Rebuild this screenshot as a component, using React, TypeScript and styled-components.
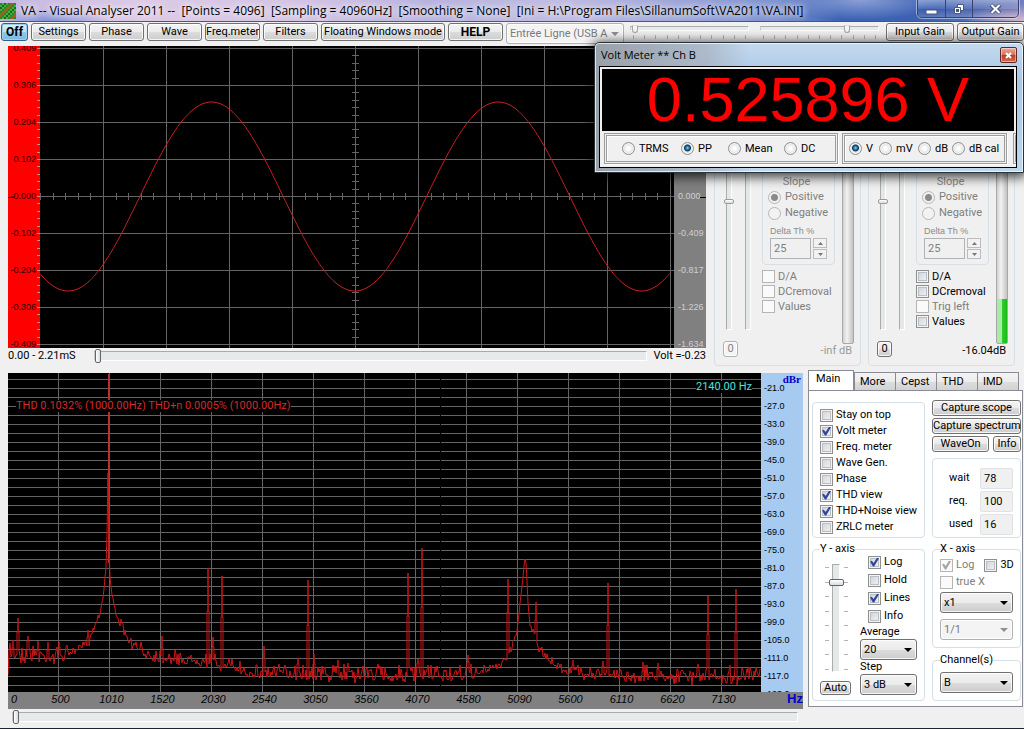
import React from "react";
import styled, { createGlobalStyle, css } from "styled-components";

const GlobalStyle = createGlobalStyle`
  *, *::before, *::after { box-sizing: border-box; }
  body {
    margin: 0;
    background: #f0f0f0;
    color: #000;
    font: 11px/14px Roboto, "Liberation Sans", Arial, sans-serif;
  }
  button, input, select { font: inherit; color: inherit; margin: 0; }
  fieldset { margin: 0; padding: 0; min-width: 0; }
  legend { padding: 0; }
`;

/* ---------- window frame ---------- */

const Window = styled.div`
  position: relative;
  display: flex;
  flex-direction: column;
  min-height: 100vh;
  min-width: 900px;
  overflow: hidden;
  background: #f0f0f0;
  border-bottom: 1px solid #1c2433;
`;

const TitleBar = styled.header`
  display: flex;
  align-items: flex-start;
  height: 22px;
  padding: 0 5px 0 0;
  border-bottom: 1px solid #4b5378;
  background:
    radial-gradient(ellipse 60px 14px at 50px 22px, #7d90d8, transparent),
    radial-gradient(ellipse 80px 20px at 84% 0, #8c9fd6, transparent),
    radial-gradient(ellipse 60px 16px at 100% 20px, #d5b4cf, transparent),
    linear-gradient(to right, #c3b6e0 0, #dccae6 14%, #d3c3e4 30%, #b7b3dd 42%, #c0bce2 55%, #9da6d8 66%, #7d92cf 76%, #3b62b5 82%, #3c61b3 90%, #7080bd 100%);
`;

const AppIcon = styled.svg`
  flex: none;
  width: 16px;
  height: 16px;
  margin-top: 3px;
`;

const Title = styled.h1`
  flex: 1;
  margin: 0 0 0 5px;
  font: 400 12px/22px "Open Sans", "Noto Sans", sans-serif;
  white-space: pre;
  text-shadow: 0 0 6px #fff, 0 0 8px #fff;
`;

const CaptionButtons = styled.div`
  display: flex;
  height: 18px;
  border: 1px solid #3a4370;
  border-top: 0;
  border-radius: 0 0 5px 5px;
  box-shadow: 0 0 0 1px rgba(255, 255, 255, 0.45);
`;

const CaptionButton = styled.button<{ $wide?: boolean }>`
  display: grid;
  place-items: center;
  width: ${(p) => (p.$wide ? 46 : 27)}px;
  padding: 0;
  border: 0;
  background: linear-gradient(rgba(255, 255, 255, 0.35), rgba(255, 255, 255, 0.05) 50%, rgba(20, 30, 90, 0.15) 51%, rgba(255, 255, 255, 0.15));
  & + & { border-left: 1px solid #3a4370; }
`;

/* ---------- shared controls ---------- */

const Button = styled.button<{ $width?: number; $height?: number; $bold?: boolean; $hot?: boolean }>`
  flex: none;
  width: ${(p) => (p.$width ? `${p.$width}px` : "auto")};
  height: ${(p) => p.$height ?? 18}px;
  padding: 0;
  border: 1px solid #707070;
  border-radius: 3px;
  background: linear-gradient(#f3f3f3, #ebebeb 50%, #dcdcdc 51%, #cdcdcd);
  box-shadow: inset 0 0 0 1px rgba(255, 255, 255, 0.8);
  line-height: 12px;
  white-space: nowrap;
  font-weight: ${(p) => (p.$bold ? 700 : 400)};
  font-size: ${(p) => (p.$bold ? 12 : 11)}px;
  ${(p) =>
    p.$hot &&
    css`
      border-color: #2c628b;
      background: linear-gradient(#dbeffb, #b9def3 50%, #8fc8ea 51%, #7db9df);
      box-shadow: inset 0 0 0 1px #9fd0ec;
    `}
  &:disabled { color: #838383; border-color: #adb2b5; background: #f4f4f4; }
`;

const SelectBox = styled.div<{ $width?: number; $disabled?: boolean }>`
  position: relative;
  flex: none;
  width: ${(p) => (p.$width ? `${p.$width}px` : "100%")};
  height: 21px;
  &::after {
    content: "";
    position: absolute;
    top: 9px;
    right: 5px;
    border: 4px solid transparent;
    border-top-color: ${(p) => (p.$disabled ? "#8f8f8f" : "#000")};
    border-bottom: 0;
    pointer-events: none;
  }
`;

const Select = styled.select`
  appearance: none;
  width: 100%;
  height: 100%;
  padding: 0 15px 0 3px;
  border: 1px solid #707070;
  border-radius: 3px;
  background: linear-gradient(#f3f3f3, #ebebeb 50%, #dcdcdc 51%, #cdcdcd);
  box-shadow: inset 0 0 0 1px rgba(255, 255, 255, 0.8);
  &:disabled { opacity: 1; color: #7a7a7a; border-color: #adb2b5; background: #f4f4f4; }
`;

const Check = styled.label<{ $disabled?: boolean }>`
  display: flex;
  align-items: center;
  gap: 3px;
  height: 16px;
  white-space: nowrap;
  color: ${(p) => (p.$disabled ? "#7e7e7e" : "#000")};
`;

const CheckInput = styled.input.attrs({ type: "checkbox" })`
  appearance: none;
  flex: none;
  display: grid;
  place-items: center;
  width: 13px;
  height: 13px;
  border: 1px solid #8e8f8f;
  background: linear-gradient(135deg, #cbcfd5, #f6f6f6);
  box-shadow: inset 0 0 0 1px #f4f4f4, inset 0 0 0 2px #b9bfc6;
  &:checked::after {
    content: "";
    width: 9px;
    height: 9px;
    background: #31479c;
    clip-path: polygon(0 45%, 20% 35%, 40% 62%, 80% 0, 100% 8%, 46% 100%, 32% 100%);
  }
  &:disabled { border-color: #b5b5b5; background: #fafafa; box-shadow: none; }
  &:disabled:checked::after { background: #a5a5a5; }
`;

const Radio = styled.label<{ $disabled?: boolean }>`
  display: flex;
  align-items: center;
  gap: 4px;
  height: 16px;
  white-space: nowrap;
  color: ${(p) => (p.$disabled ? "#7e7e7e" : "#000")};
`;

const RadioInput = styled.input.attrs({ type: "radio" })`
  appearance: none;
  flex: none;
  width: 13px;
  height: 13px;
  border: 1px solid #8e8f8f;
  border-radius: 50%;
  background: radial-gradient(circle, #fdfdfd 20%, #d2d6db 80%);
  box-shadow: inset 0 0 0 1px #f4f4f4;
  &:checked { background: radial-gradient(circle at 50% 45%, #7fd4f5 0, #1b6a9c 2px, #0e3350 3px, #e4e8eb 4px); }
  &:disabled { border-color: #b5b5b5; background: #f2f2f2; }
  &:disabled:checked { background: radial-gradient(circle, #8a8a8a 3px, #ededed 4px); }
`;

const Range = styled.input.attrs({ type: "range" })`
  appearance: none;
  display: block;
  flex: 1;
  min-width: 0;
  height: 16px;
  background: transparent;
  &::-webkit-slider-runnable-track {
    height: 10px;
    border: 1px solid #fff;
    border-top-color: #a9acac;
    border-left-color: #c8caca;
    background: #e7eaea;
  }
  &::-webkit-slider-thumb {
    appearance: none;
    width: 6px;
    height: 14px;
    margin-top: -3px;
    border: 1px solid #60656a;
    border-radius: 2px;
    background: linear-gradient(to right, #fff, #dcdcdc);
  }
`;

const GainRange = styled(Range)`
  flex: none;
  width: 100%;
  height: 9px;
  &::-webkit-slider-runnable-track { height: 5px; }
  &::-webkit-slider-thumb {
    width: 6px;
    height: 8px;
    margin-top: -2px;
    border-color: #a5a5a5;
    border-top-color: #e0e0e0;
    border-radius: 1px 1px 4px 4px;
    background: #f4f4f4;
  }
`;

const VerticalRange = styled.input.attrs({ type: "range" })<{ $length: number; $track: number; $thumb: number }>`
  appearance: none;
  display: block;
  writing-mode: vertical-lr;
  width: 15px;
  height: ${(p) => p.$length}px;
  background: transparent;
  &::-webkit-slider-runnable-track {
    width: ${(p) => p.$track}px;
    margin: 0 auto;
    border: 1px solid #fff;
    border-top-color: #a9acac;
    border-left-color: #a9acac;
    background: #e4e8e8;
  }
  &::-webkit-slider-thumb {
    appearance: none;
    width: ${(p) => p.$thumb}px;
    height: ${(p) => (p.$thumb > 10 ? 7 : 5)}px;
    margin-left: ${(p) => Math.round((p.$track - p.$thumb) / 2) - 1}px;
    border: 1px solid ${(p) => (p.$thumb > 10 ? "#60656a" : "#9a9a9a")};
    border-radius: 2px;
    background: linear-gradient(#fff, #dcdcdc);
  }
`;

/* ---------- toolbar ---------- */

const Toolbar = styled.nav`
  display: flex;
  align-items: flex-start;
  gap: 3px;
  height: 24px;
  padding: 1px 0 0 1px;
`;

const GainSliders = styled.div`
  flex: 1;
  display: flex;
  gap: 11px;
  padding: 1px 4px 0 3px;
`;

const GainSlider = styled.div`
  flex: 1;
  min-width: 0;
`;

const Ticks = styled.div<{ $vertical?: boolean }>`
  display: flex;
  justify-content: space-between;
  flex-direction: ${(p) => (p.$vertical ? "column" : "row")};
  padding: ${(p) => (p.$vertical ? "3px 0 2px" : "2px 3px 0")};
`;

const Tick = styled.i<{ $vertical?: boolean }>`
  width: ${(p) => (p.$vertical ? 4 : 1)}px;
  height: ${(p) => (p.$vertical ? 1 : 4)}px;
  background: #b4b4b4;
`;

/* ---------- scope ---------- */

const UpperRow = styled.div`
  display: flex;
  gap: 8px;
  padding: 0 9px 0 8px;
`;

const Scope = styled.section`
  flex: 1;
  min-width: 0;
`;

const ScopeScreen = styled.div`
  display: flex;
  height: 302px;
  overflow: hidden;
  background: #000;
`;

const VoltAxis = styled.div<{ $right?: boolean }>`
  flex: none;
  position: relative;
  width: 32px;
  padding-top: ${(p) => (p.$right ? 132 : 0)}px;
  background: ${(p) => (p.$right ? "#808080" : "#f00")};
  color: ${(p) => (p.$right ? "#d0d0d0" : "#300000")};
  text-align: ${(p) => (p.$right ? "left" : "right")};
`;

const VoltScale = styled.ol<{ $right?: boolean }>`
  margin: ${(p) => (p.$right ? "0 0 -16px" : "-16px 0")};
  padding: ${(p) => (p.$right ? "0 0 0 4px" : "0 4px 0 0")};
  list-style: none;
  font: 9px/37px "Liberation Sans", Arial, sans-serif;
`;

const AxisTicks = styled.svg`
  position: absolute;
  inset: 0;
  width: 100%;
  height: 100%;
`;

const Plot = styled.svg`
  flex: 1;
  display: block;
  min-width: 0;
  width: 100%;
  height: 100%;
`;

const ScopeFooter = styled.div`
  display: flex;
  align-items: center;
  gap: 6px;
  height: 16px;
`;

const TimeLabel = styled.label`
  flex: none;
  width: 80px;
  white-space: nowrap;
`;

/* ---------- channel strips ---------- */

const Channels = styled.div`
  flex: none;
  display: flex;
  gap: 7px;
`;

const Channel = styled.section`
  display: grid;
  grid-template-columns: 47px 80px 12px;
  grid-template-rows: 288px 1fr;
  width: 147px;
  height: 320px;
  padding-top: 5px;
  border: 1px solid #d5dfe5;
  border-radius: 0 0 4px 4px;
`;

const ChannelSliders = styled.div`
  display: flex;
  gap: 4px;
  padding-left: 6px;
`;

const ChannelBody = styled.div`
  display: flex;
  flex-direction: column;
`;

const Trigger = styled.div`
  display: flex;
  flex-direction: column;
  justify-content: flex-end;
  width: 73px;
  height: 213px;
  padding: 0 5px 5px 5px;
  border: 1px solid #d5dfe5;
  border-radius: 4px;
  color: #8b8b8b;
`;

const SlopeTitle = styled.span`
  align-self: center;
  padding-right: 4px;
  line-height: 14px;
`;

const DeltaTitle = styled.label`
  margin-top: 5px;
  padding-left: 2px;
  font: 9px/10px "Liberation Sans", Arial, sans-serif;
  white-space: nowrap;
`;

const DeltaRow = styled.div`
  display: flex;
  gap: 2px;
  height: 21px;
  padding-left: 2px;
  margin-top: 2px;
`;

const DeltaInput = styled.input`
  width: 41px;
  padding: 0 3px;
  border: 1px solid #aeb3b8;
  background: #f0f0f0;
  &:disabled { color: #7e7e7e; }
`;

const Spinner = styled.div`
  display: flex;
  flex-direction: column;
  gap: 1px;
`;

const SpinButton = styled.button`
  display: grid;
  place-items: center;
  width: 14px;
  height: 10px;
  padding: 0;
  border: 1px solid #b9bdc1;
  background: #f2f2f2;
`;

const ChannelChecks = styled.div`
  display: flex;
  flex-direction: column;
  margin-top: 4px;
  & > label { height: 15px; }
`;

const Meter = styled.div<{ $level: number }>`
  align-self: start;
  height: 292px;
  width: 12px;
  border: 1px solid #a8a8a8;
  border-radius: 2px;
  background:
    linear-gradient(to right, #a4eda4 0 5px, #38c838 5px, #10c010) bottom / 100% ${(p) => p.$level}px no-repeat,
    linear-gradient(to right, #d0d0d0, #f2f2f2 40%, #c2c2c2);
`;

const ChannelFoot = styled.div<{ $disabled?: boolean }>`
  grid-column: 1 / -1;
  display: flex;
  align-items: flex-start;
  justify-content: space-between;
  padding: 1px 2px 0 8px;
  color: ${(p) => (p.$disabled ? "#9a9a9a" : "#000")};
`;

const Reading = styled.span`
  line-height: 20px;
`;

/* ---------- spectrum ---------- */

const LowerRow = styled.div`
  flex: 1;
  display: flex;
  gap: 5px;
  padding: 0 1px 0 8px;
`;

const Spectrum = styled.section`
  flex: 1;
  min-width: 0;
  padding-top: 3px;
`;

const SpectrumScreen = styled.div`
  display: flex;
  height: 319px;
  overflow: hidden;
`;

const SpectrumPlot = styled.div`
  position: relative;
  flex: 1;
  min-width: 0;
  background: #000;
`;

const Readout = styled.span<{ $side: "left" | "right" }>`
  position: absolute;
  top: ${(p) => (p.$side === "left" ? 27 : 8)}px;
  ${(p) => (p.$side === "left" ? "left: 8px; color: #d42a2a;" : "right: 9px; color: #4fe0dc;")}
  background: #000;
  line-height: 12px;
  white-space: nowrap;
`;

const DbAxis = styled.div`
  position: relative;
  flex: none;
  width: 42px;
  background: #a6caf0;
`;

const DbUnit = styled.b`
  position: absolute;
  top: 0;
  right: 2px;
  color: #0000c8;
  font: 700 11px/12px "Liberation Serif", "Times New Roman", serif;
`;

const DbScale = styled.ol`
  margin: 0;
  padding: 6px 0 0 3px;
  list-style: none;
  font: 9px/18px "Liberation Sans", Arial, sans-serif;
`;

const FreqAxis = styled.ol`
  display: flex;
  height: 17px;
  margin: 0;
  padding: 0;
  list-style: none;
  background: #808080;
  font: italic 11px/15px "Liberation Sans", Arial, sans-serif;
`;

const FreqLabel = styled.li<{ $grow: number }>`
  flex: ${(p) => p.$grow} 1 0;
  min-width: 0;
  text-align: center;
`;

const FreqFirst = styled(FreqLabel)`
  text-indent: 3px;
  text-align: left;
`;

const FreqUnit = styled.li`
  flex: none;
  width: 54px;
  color: #0000c8;
  font: 700 13px/14px "Liberation Sans", Arial, sans-serif;
  text-align: right;
`;

const ScrollRow = styled.div`
  display: flex;
  padding: 0 5px 0 4px;
`;

/* ---------- tabbed panel ---------- */

const TabPanel = styled.aside`
  flex: none;
  display: flex;
  flex-direction: column;
  width: 215px;
  height: 337px;
`;

const TabList = styled.div`
  display: flex;
  align-items: flex-end;
  height: 21px;
  margin-bottom: -1px;
`;

const Tab = styled.button<{ $selected?: boolean }>`
  width: ${(p) => (p.$selected ? 46 : 42)}px;
  height: ${(p) => (p.$selected ? 21 : 19)}px;
  padding: 0 0 ${(p) => (p.$selected ? 3 : 0)}px ${(p) => (p.$selected ? 7 : 5)}px;
  border: 1px solid #898c95;
  border-bottom-color: ${(p) => (p.$selected ? "#fff" : "#898c95")};
  margin-right: ${(p) => (p.$selected ? 0 : -1)}px;
  background: ${(p) => (p.$selected ? "#fff" : "linear-gradient(#f4f4f4, #ececec 50%, #dedede 51%, #d2d2d2)")};
  text-align: left;
`;

const TabBody = styled.div`
  flex: 1;
  display: grid;
  grid-template-columns: 113px 89px;
  gap: 7px;
  padding: 9px 2px 5px 3px;
  border: 1px solid #898c95;
  background: #fff;
`;

const Column = styled.div`
  display: flex;
  flex-direction: column;
`;

const Group = styled.fieldset<{ $height: number; $gap?: number }>`
  height: ${(p) => p.$height}px;
  margin-top: ${(p) => p.$gap ?? 0}px;
  padding: 0 7px;
  border: 1px solid #d5dfe5;
  border-radius: 4px;
`;

const Legend = styled.legend`
  background: #fff;
  line-height: 14px;
`;

const CheckList = styled.div`
  padding-top: 4px;
`;

const ButtonStack = styled.div`
  display: flex;
  flex-wrap: wrap;
  justify-content: space-between;
  gap: 2px 0;
`;

const Stats = styled.div`
  display: flex;
  flex-direction: column;
  gap: 2px;
  padding: 9px 0 0 9px;
`;

const Stat = styled.label`
  display: flex;
  justify-content: space-between;
  line-height: 19px;
`;

const StatInput = styled.input`
  width: 33px;
  height: 21px;
  padding: 0 3px;
  border: 1px solid #dde3e6;
  border-radius: 2px;
  background: #f0f0f0;
`;

const YAxisGrid = styled.div`
  display: grid;
  grid-template-columns: 32px 57px;
  gap: 8px;
`;

const YSlider = styled.div`
  display: flex;
  justify-content: center;
  height: 108px;
  margin: 8px 0 9px;
`;

const YControls = styled.div`
  display: flex;
  flex-direction: column;
  margin-top: -3px;
`;

const YChecks = styled.div`
  padding: 0 0 0 8px;
  & > label { height: 18px; }
`;

const FieldLabel = styled.label`
  line-height: 14px;
`;

const XStack = styled.div`
  display: flex;
  flex-direction: column;
`;

const XRow = styled.div`
  display: flex;
  gap: 10px;
  margin: 1px -4px 1px 0;
`;

const Spaced = styled.div<{ $top: number }>`
  padding-top: ${(p) => p.$top}px;
`;

/* ---------- volt meter window ---------- */

const MeterWindow = styled.section`
  position: absolute;
  top: 42px;
  right: 0;
  width: 430px;
  padding: 0 6px 4px 4px;
  border: 1px solid #2b3138;
  border-radius: 5px 5px 0 0;
  background:
    linear-gradient(to right, rgba(150, 155, 162, 0.9) 0, rgba(165, 175, 188, 0.7) 26%, transparent 36%),
    linear-gradient(#c3d9ef, #a9c6e4 30%, #bcd7f0);
  box-shadow: inset 0 0 0 1px rgba(255, 255, 255, 0.7), 0 2px 12px 2px rgba(0, 0, 0, 0.75);
`;

const MeterTitle = styled.header`
  display: flex;
  align-items: center;
  justify-content: space-between;
  height: 23px;
  padding: 1px 0 0 2px;
  font: 11px/20px "Open Sans", "Noto Sans", sans-serif;
`;

const CloseButton = styled.button`
  display: grid;
  place-items: center;
  width: 17px;
  height: 16px;
  padding: 0;
  border: 1px solid #5e2a26;
  border-radius: 2px;
  background: linear-gradient(#e9a99c, #d5705c 50%, #bd3a22 51%, #d8694f);
  box-shadow: inset 0 0 0 1px rgba(255, 255, 255, 0.45);
`;

const MeterClient = styled.div`
  overflow: hidden;
  border: 1px solid #000;
  background: #f0f0f0;
  padding: 2px;
`;

const Display = styled.output`
  display: block;
  height: 62px;
  background: #000;
  color: #f00;
  font: 63px/61px "Liberation Sans", Arial, sans-serif;
  text-align: center;
  white-space: nowrap;
`;

const MeterOptions = styled.div`
  display: flex;
  gap: 4px;
  height: 34px;
  padding: 2px 0 1px 2px;
`;

const OptionFrame = styled.fieldset<{ $width: number }>`
  flex: none;
  display: flex;
  align-items: center;
  width: ${(p) => p.$width}px;
  border: 3px double #9c9c9c;
  box-shadow: inset 1px 1px 0 #fff, 1px 1px 0 #fff;
  &:last-child { margin-left: 2px; }
`;

const OptionSlot = styled.div<{ $width: number }>`
  flex: none;
  width: ${(p) => p.$width}px;
`;

const OptionRow = styled.div<{ $indent: number }>`
  display: flex;
  padding-left: ${(p) => p.$indent}px;
`;

/* ---------- data ---------- */

const range = (n: number) => Array.from({ length: n }, (_, i) => i);

const LEFT_VOLTS = ["0.409", "0.306", "0.204", "0.102", "-0.000", "-0.102", "-0.204", "-0.306", "-0.409"];
const RIGHT_VOLTS = ["0.000", "-0.409", "-0.817", "-1.226", "-1.634"];
const DB_MARKS = range(18).map((i) => (-21 - 6 * i).toFixed(1));
const FREQS = [500, 1010, 1520, 2030, 2540, 3050, 3560, 4070, 4580, 5090, 5600, 6110, 6620, 7130];

const sinePath = range(631)
  .map((x) => `${x ? "L" : "M"}${x} ${(150.5 - 94.5 * Math.cos((2 * Math.PI * (x - 171.5)) / 286.7)).toFixed(1)}`)
  .join("");

/* Noise floor of the spectrum, as [x, y, jitter] knots. */
const FLOOR: [number, number, number][] = [
  [0, 280, 14], [20, 282, 10], [45, 285, 9], [62, 280, 6], [72, 275, 5], [80, 268, 5], [86, 255, 4], [92, 239, 3],
  [95, 225, 2], [97, 205, 2], [98, 195, 1], [99, 160, 0], [100, 100, 0], [101, 170, 0], [102, 205, 1], [104, 222, 1],
  [107, 236, 3], [111, 248, 5], [117, 262, 5], [124, 272, 5], [135, 279, 6], [150, 284, 7], [170, 287, 7],
  [195, 288, 8], [225, 295, 7], [245, 300, 7], [300, 301, 9], [400, 302, 9], [450, 303, 8], [475, 299, 6],
  [490, 293, 5], [500, 285, 5], [505, 270, 5], [509, 258, 5], [511, 240, 2], [513, 222, 2], [515, 205, 1],
  [516, 193, 0], [517, 186, 0], [518, 190, 0], [519, 208, 0], [520, 230, 1], [522, 252, 3], [526, 260, 4],
  [530, 275, 5], [538, 285, 5], [552, 295, 5], [570, 300, 7], [620, 303, 9], [753, 304, 8],
];

/* Narrow lines standing out of the floor, as [x, top]. */
const PEAKS: [number, number][] = [
  [5, 267], [10, 245], [20, 263], [30, 268], [40, 269], [51, 269], [80, 257], [154, 263], [200, 195], [205, 264],
  [214, 203], [256, 273], [290, 285], [300, 207], [306, 281], [330, 287], [340, 290], [400, 200], [410, 286],
  [414, 175], [460, 282], [500, 206], [528, 229], [565, 287], [600, 210], [595, 288], [635, 289], [650, 290],
  [690, 291], [700, 223], [728, 216], [740, 294],
];

function buildSpectrum() {
  let seed = 7;
  const random = () => {
    seed = (seed * 16807) % 2147483647;
    return seed / 2147483647;
  };
  const peaks = new Map(PEAKS);
  let path = "M0 302";
  let knot = 0;
  for (let x = 1; x < 753; x++) {
    while (FLOOR[knot + 1][0] < x) knot++;
    const [x0, y0, n0] = FLOOR[knot];
    const [x1, y1, n1] = FLOOR[knot + 1];
    const t = (x - x0) / (x1 - x0);
    const jitter = n0 + (n1 - n0) * t;
    const r = random() + random() - 1;
    const y = Math.min(315, Math.round(y0 + (y1 - y0) * t + r * jitter * (r < 0 ? 1.5 : 1)));
    const top = peaks.get(x);
    if (top !== undefined) {
      const mid = Math.round(top + (y - top) * 0.45);
      path += `L${x - 1} ${mid}L${x} ${mid}L${x} ${top}L${x} ${mid}L${x + 1} ${mid}L${x + 1} ${y}`;
      x++;
    } else {
      path += `L${x} ${y}`;
    }
  }
  return path;
}

const spectrumPath = buildSpectrum();

const ICON_COLORS = ["#1f8a2c", "#2fae38", "#c9b52c", "#146b22", "#48b03a", "#8f6a1c", "#1f8a2c"];

/* ---------- parts ---------- */

function CheckBox({ label, checked, disabled }: { label: string; checked?: boolean; disabled?: boolean }) {
  return (
    <Check $disabled={disabled}>
      <CheckInput defaultChecked={checked} disabled={disabled} />
      {label}
    </Check>
  );
}

function RadioButton(props: { name: string; label: string; checked?: boolean; disabled?: boolean }) {
  return (
    <Radio $disabled={props.disabled}>
      <RadioInput name={props.name} defaultChecked={props.checked} disabled={props.disabled} />
      {props.label}
    </Radio>
  );
}

function DropDown(props: { id?: string; label?: string; value: string; width?: number; disabled?: boolean }) {
  return (
    <SelectBox $width={props.width} $disabled={props.disabled}>
      <Select id={props.id} aria-label={props.label} disabled={props.disabled} defaultValue={props.value}>
        <option>{props.value}</option>
      </Select>
    </SelectBox>
  );
}

function TickMarks({ count, vertical }: { count: number; vertical?: boolean }) {
  return (
    <Ticks $vertical={vertical}>
      {range(count).map((i) => (
        <Tick key={i} $vertical={vertical} />
      ))}
    </Ticks>
  );
}

function ScopeView() {
  return (
    <Scope>
      <ScopeScreen>
        <VoltAxis>
          <VoltScale>
            {LEFT_VOLTS.map((v) => (
              <li key={v}>{v}</li>
            ))}
          </VoltScale>
          <AxisTicks viewBox="0 0 32 302" preserveAspectRatio="none" shapeRendering="crispEdges">
            {range(41).map((i) => (
              <path key={i} d={`M29 ${2.5 + 7.4 * i}H32`} stroke="#d88" />
            ))}
            <path d="M0 151.5H6" stroke="#000" />
          </AxisTicks>
        </VoltAxis>
        <Plot viewBox="0 0 634 302" preserveAspectRatio="none" role="img" aria-label="Oscilloscope trace">
          <g stroke="#646464" shapeRendering="crispEdges">
            {range(10).map((i) => (
              <path key={i} d={`M${63.5 + 63 * i} 0V302`} />
            ))}
            {range(9).map((i) => (
              <path key={i} d={`M0 ${2.5 + 37 * i}H634`} />
            ))}
            {range(40).map((i) => (
              <path key={i} d={`M312 ${Math.round(2 + 7.4 * i) + 0.5}H319`} />
            ))}
            {range(50).map((i) => (
              <path key={i} d={`M${Math.round(12.6 * i) + 0.5} 147V154`} />
            ))}
          </g>
          <path d={sinePath} fill="none" stroke="#cc2020" />
        </Plot>
        <VoltAxis $right>
          <VoltScale $right>
            {RIGHT_VOLTS.map((v) => (
              <li key={v}>{v}</li>
            ))}
          </VoltScale>
          <AxisTicks viewBox="0 0 32 302" preserveAspectRatio="none" shapeRendering="crispEdges">
            <path d="M26 151.5H32" stroke="#000" />
          </AxisTicks>
        </VoltAxis>
      </ScopeScreen>
      <ScopeFooter>
        <TimeLabel htmlFor="time-offset">0.00 - 2.21mS</TimeLabel>
        <Range id="time-offset" defaultValue={0} />
        <span>Volt =-0.23</span>
      </ScopeFooter>
    </Scope>
  );
}

function ChannelStrip(props: { id: string; reading: string; level: number; active?: boolean }) {
  const { id, active } = props;
  return (
    <Channel aria-label={`Channel ${id}`}>
      <ChannelSliders>
        <VerticalRange aria-label="Position" $length={278} $track={6} $thumb={10} min={0} max={100} defaultValue={54} />
        <VerticalRange aria-label="Trigger" $length={278} $track={6} $thumb={10} min={0} max={100} defaultValue={10} />
      </ChannelSliders>
      <ChannelBody>
        <Trigger role="group" aria-label="Trigger">
          <SlopeTitle>Slope</SlopeTitle>
          <RadioButton name={`slope-${id}`} label="Positive" checked disabled />
          <RadioButton name={`slope-${id}`} label="Negative" disabled />
          <DeltaTitle htmlFor={`delta-${id}`}>Delta Th %</DeltaTitle>
          <DeltaRow>
            <DeltaInput id={`delta-${id}`} defaultValue="25" disabled />
            <Spinner>
              <SpinButton aria-label="Increase" disabled>
                <svg width="5" height="3">
                  <path d="M0 3L2.5 0L5 3Z" fill="#777" />
                </svg>
              </SpinButton>
              <SpinButton aria-label="Decrease" disabled>
                <svg width="5" height="3">
                  <path d="M0 0L2.5 3L5 0Z" fill="#777" />
                </svg>
              </SpinButton>
            </Spinner>
          </DeltaRow>
        </Trigger>
        <ChannelChecks>
          <CheckBox label="D/A" disabled={!active} />
          <CheckBox label="DCremoval" disabled={!active} />
          {active && <CheckBox label="Trig left" disabled />}
          <CheckBox label="Values" disabled={!active} />
        </ChannelChecks>
      </ChannelBody>
      <Meter $level={props.level} />
      <ChannelFoot $disabled={!active}>
        <Button $width={15} $height={16} disabled={!active}>
          0
        </Button>
        <Reading>{props.reading}</Reading>
      </ChannelFoot>
    </Channel>
  );
}

function SpectrumView() {
  return (
    <Spectrum>
      <SpectrumScreen>
        <SpectrumPlot>
          <Plot viewBox="0 0 753 319" preserveAspectRatio="none" role="img" aria-label="Spectrum">
            <g stroke="#646464" shapeRendering="crispEdges">
              {range(14).map((i) => (
                <path key={i} d={`M${50.5 + 51 * i} 0V319`} />
              ))}
              {range(35).map((i) => (
                <path key={i} d={`M0 ${6.5 + 9 * i}H753`} />
              ))}
              <path d="M432.5 0V319" stroke="#000" />
            </g>
            <path d="M100.5 1V190" stroke="#b83030" strokeWidth="2" shapeRendering="crispEdges" />
            <path d={spectrumPath} fill="none" stroke="#cc1616" />
          </Plot>
          <Readout $side="left">THD 0.1032% (1000.00Hz) THD+n 0.0005% (1000.00Hz)</Readout>
          <Readout $side="right">2140.00 Hz</Readout>
        </SpectrumPlot>
        <DbAxis>
          <DbUnit>dBr</DbUnit>
          <DbScale>
            {DB_MARKS.map((v) => (
              <li key={v}>{v}</li>
            ))}
          </DbScale>
        </DbAxis>
      </SpectrumScreen>
      <FreqAxis>
        <FreqFirst $grow={27}>0</FreqFirst>
        {FREQS.map((f) => (
          <FreqLabel key={f} $grow={51}>
            {f}
          </FreqLabel>
        ))}
        <FreqUnit>Hz</FreqUnit>
      </FreqAxis>
      <ScrollRow>
        <Range aria-label="Frequency offset" defaultValue={0} />
      </ScrollRow>
    </Spectrum>
  );
}

function SettingsTabs() {
  return (
    <TabPanel>
      <TabList role="tablist">
        <Tab role="tab" $selected aria-selected>
          Main
        </Tab>
        {["More", "Cepst", "THD", "IMD"].map((t) => (
          <Tab key={t} role="tab">
            {t}
          </Tab>
        ))}
      </TabList>
      <TabBody role="tabpanel">
        <Column>
          <Group $height={136} $gap={2}>
            <CheckList>
              <CheckBox label="Stay on top" />
              <CheckBox label="Volt meter" checked />
              <CheckBox label="Freq. meter" />
              <CheckBox label="Wave Gen." />
              <CheckBox label="Phase" />
              <CheckBox label="THD view" checked />
              <CheckBox label="THD+Noise view" checked />
              <CheckBox label="ZRLC meter" />
            </CheckList>
          </Group>
          <Group $height={159} $gap={4}>
            <Legend>Y - axis</Legend>
            <YAxisGrid>
              <div>
                <YSlider>
                  <TickMarks count={8} vertical />
                  <VerticalRange aria-label="Y scale" $length={108} $track={8} $thumb={15} min={0} max={7} step={1} defaultValue={1} />
                  <TickMarks count={8} vertical />
                </YSlider>
                <Button $width={31} $height={14}>
                  Auto
                </Button>
              </div>
              <YControls>
                <YChecks>
                  <CheckBox label="Log" checked />
                  <CheckBox label="Hold" />
                  <CheckBox label="Lines" checked />
                  <CheckBox label="Info" />
                </YChecks>
                <FieldLabel htmlFor="average">Average</FieldLabel>
                <DropDown id="average" value="20" />
                <FieldLabel htmlFor="step">Step</FieldLabel>
                <DropDown id="step" value="3 dB" />
              </YControls>
            </YAxisGrid>
          </Group>
        </Column>
        <Column>
          <ButtonStack>
            <Button $width={89} $height={16}>Capture scope</Button>
            <Button $width={89} $height={16}>Capture spectrum</Button>
            <Button $width={57} $height={16}>WaveOn</Button>
            <Button $width={28} $height={16}>Info</Button>
          </ButtonStack>
          <Group $height={80} $gap={6}>
            <Stats>
              <Stat>
                wait
                <StatInput readOnly value="78" />
              </Stat>
              <Stat>
                req.
                <StatInput readOnly value="100" />
              </Stat>
              <Stat>
                used
                <StatInput readOnly value="16" />
              </Stat>
            </Stats>
          </Group>
          <Group $height={106} $gap={4}>
            <Legend>X - axis</Legend>
            <XStack>
              <XRow>
                <CheckBox label="Log" checked disabled />
                <CheckBox label="3D" />
              </XRow>
              <CheckBox label="true X" disabled />
              <Spaced $top={2}>
                <DropDown label="Zoom" value="x1" />
              </Spaced>
              <Spaced $top={6}>
                <DropDown label="Ratio" value="1/1" disabled />
              </Spaced>
            </XStack>
          </Group>
          <Group $height={48} $gap={5}>
            <Legend>Channel(s)</Legend>
            <Spaced $top={5}>
              <DropDown label="Channel(s)" value="B" />
            </Spaced>
          </Group>
        </Column>
      </TabBody>
    </TabPanel>
  );
}

function VoltMeter() {
  return (
    <MeterWindow aria-label="Volt Meter">
      <MeterTitle>
        <span>Volt Meter ** Ch B</span>
        <CloseButton aria-label="Close">
          <svg width="7" height="7" viewBox="0 0 7 7">
            <path d="M1 1L6 6M6 1L1 6" stroke="#fff" strokeWidth="2" />
          </svg>
        </CloseButton>
      </MeterTitle>
      <MeterClient>
        <Display>0.525896 V</Display>
        <MeterOptions>
          <OptionFrame $width={234} aria-label="Measure">
            <OptionRow $indent={15}>
              <OptionSlot $width={59}>
                <RadioButton name="measure" label="TRMS" />
              </OptionSlot>
              <OptionSlot $width={47}>
                <RadioButton name="measure" label="PP" checked />
              </OptionSlot>
              <OptionSlot $width={56}>
                <RadioButton name="measure" label="Mean" />
              </OptionSlot>
              <RadioButton name="measure" label="DC" />
            </OptionRow>
          </OptionFrame>
          <OptionFrame $width={165} aria-label="Unit">
            <OptionRow $indent={4}>
              <OptionSlot $width={30}>
                <RadioButton name="unit" label="V" checked />
              </OptionSlot>
              <OptionSlot $width={39}>
                <RadioButton name="unit" label="mV" />
              </OptionSlot>
              <OptionSlot $width={34}>
                <RadioButton name="unit" label="dB" />
              </OptionSlot>
              <RadioButton name="unit" label="dB cal" />
            </OptionRow>
          </OptionFrame>
          <OptionFrame $width={40} aria-label="Range" />
        </MeterOptions>
      </MeterClient>
    </MeterWindow>
  );
}

export default function App() {
  return (
    <>
      <GlobalStyle />
      <Window>
        <TitleBar>
          <AppIcon viewBox="0 0 8 8" shapeRendering="crispEdges" aria-hidden>
            {range(64).map((i) => (
              <rect key={i} x={i % 8} y={Math.floor(i / 8)} width="1" height="1" fill={ICON_COLORS[(i * i + 3 * i) % 7]} />
            ))}
          </AppIcon>
          <Title>
            {"VA -- Visual Analyser 2011 --  [Points = 4096]  [Sampling = 40960Hz]  [Smoothing = None]  [Ini = H:\\Program Files\\SillanumSoft\\VA2011\\VA.INI]"}
          </Title>
          <CaptionButtons>
            <CaptionButton aria-label="Minimize">
              <svg width="13" height="12">
                <rect x="1" y="7" width="11" height="4" fill="#fff" stroke="#4a5580" />
              </svg>
            </CaptionButton>
            <CaptionButton aria-label="Restore">
              <svg width="12" height="12">
                <path d="M4.5 1.5H10.5V7.5H7.5V10.5H1.5V4.5H4.5Z" fill="#fff" stroke="#4a5580" />
                <path d="M4.5 4.5H7.5V7.5" fill="none" stroke="#4a5580" />
                <rect x="3.5" y="6.5" width="2" height="2" fill="#4a5580" stroke="#4a5580" />
              </svg>
            </CaptionButton>
            <CaptionButton aria-label="Close" $wide>
              <svg width="13" height="12">
                <path d="M2 2L11 10M11 2L2 10" stroke="#4a5580" strokeWidth="4" />
                <path d="M2.5 2L10.5 10M10.5 2L2.5 10" stroke="#fff" strokeWidth="2" />
              </svg>
            </CaptionButton>
          </CaptionButtons>
        </TitleBar>
        <Toolbar>
          <Button $width={27} $bold $hot>Off</Button>
          <Button $width={55}>Settings</Button>
          <Button $width={55}>Phase</Button>
          <Button $width={55}>Wave</Button>
          <Button $width={55}>Freq.meter</Button>
          <Button $width={55}>Filters</Button>
          <Button $width={124}>Floating Windows mode</Button>
          <Button $width={55} $bold>HELP</Button>
          <DropDown label="Input line" value="Entrée Ligne (USB A" width={118} disabled />
          <GainSliders>
            <GainSlider>
              <GainRange aria-label="Input gain" defaultValue={1} />
              <TickMarks count={11} />
            </GainSlider>
            <GainSlider>
              <GainRange aria-label="Output gain" defaultValue={75} />
              <TickMarks count={11} />
            </GainSlider>
          </GainSliders>
          <Button $width={68}>Input Gain</Button>
          <Button $width={67}>Output Gain</Button>
        </Toolbar>
        <UpperRow>
          <ScopeView />
          <Channels>
            <ChannelStrip id="A" reading="-inf dB" level={0} />
            <ChannelStrip id="B" reading="-16.04dB" level={44} active />
          </Channels>
        </UpperRow>
        <Spaced $top={4} />
        <LowerRow>
          <SpectrumView />
          <SettingsTabs />
        </LowerRow>
        <VoltMeter />
      </Window>
    </>
  );
}
